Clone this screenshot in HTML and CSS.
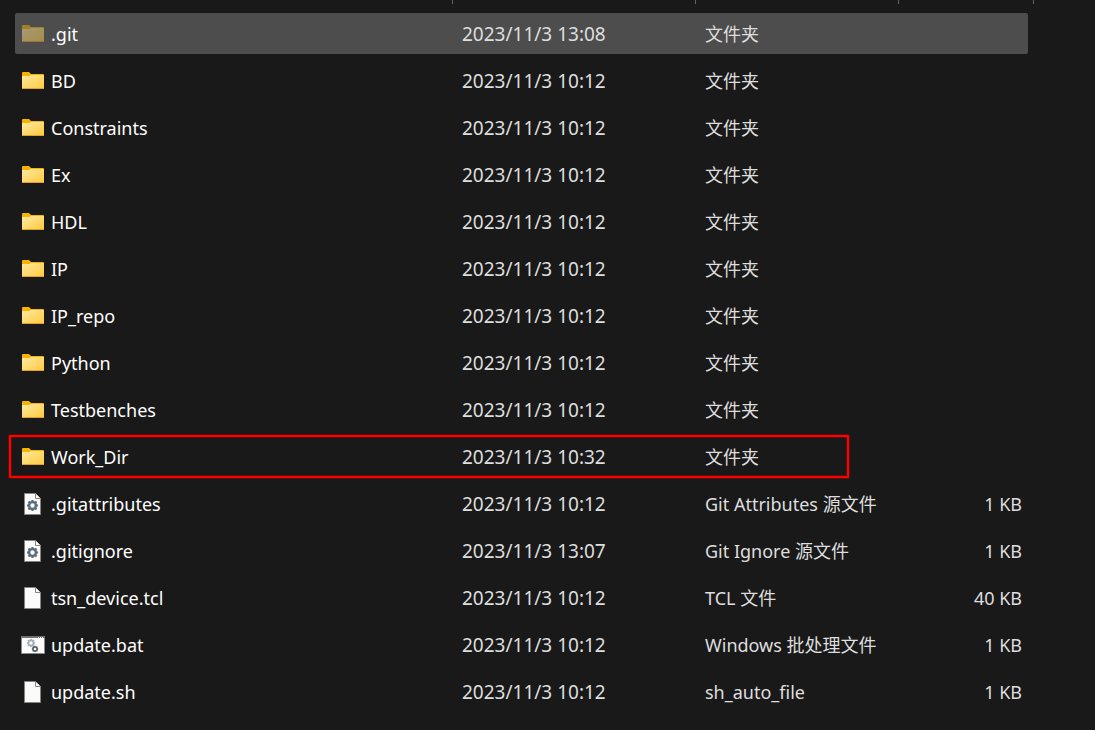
FILE: index.html
```html
<!DOCTYPE html>
<html lang="zh-CN">
<head>
<meta charset="utf-8">
<meta name="viewport" content="width=device-width, initial-scale=1">
<title>文件列表</title>
<link rel="stylesheet" href="styles.css">
</head>
<body>
<svg class="sprite" aria-hidden="true">
  <defs>
    <linearGradient id="folder-face" x1="0" y1="0" x2="1" y2="1">
      <stop offset="0" stop-color="#ffe9a4"/>
      <stop offset="1" stop-color="#ffc93c"/>
    </linearGradient>
    <symbol id="folder" viewBox="0 0 24 24">
      <path d="M1 4q0-1 1-1h6l2 2h12q1 0 1 1v4H1z" fill="#f8b200"/>
      <path d="M1 7h7l2-1h13v13.500q0 .5-.5.500h-21q-.5 0-.5-.5z" fill="url(#folder-face)"/>
      <path d="M1 19h22v.500q0 .5-.5.500h-21q-.5 0-.5-.5z" fill="#e3a02a"/>
    </symbol>
    <symbol id="page" viewBox="0 0 24 24">
      <path d="M3.500 1.500h11l5 5v16h-16z" fill="#fbfbfb" stroke="#85857f"/>
      <path d="M14.500 1.500v5h5" fill="#fbfbfb" stroke="#85857f"/>
    </symbol>
    <symbol id="gear" viewBox="-6 -6 12 12">
      <g fill="none" stroke="currentColor">
        <circle r="3.400" stroke-width="2.400"/>
        <path d="M0-5.600v2M0 3.600v2M-5.600 0h2M3.600 0h2M-4-4l1.400 1.400M2.600 2.600l1.400 1.400M-4 4l1.400-1.400M2.600-2.600l1.400-1.400" stroke-width="2.200"/>
      </g>
    </symbol>
    <symbol id="config" viewBox="0 0 24 24">
      <use href="#page"/>
      <use href="#gear" x="5.500" y="7.500" width="12" height="12" color="#5d6d76"/>
    </symbol>
    <symbol id="batch" viewBox="0 0 24 24">
      <path d="M.5 3.500h23v17H.5z" fill="#fbfbfb" stroke="#8a8a88"/>
      <path d="M0 3h24v2H0z" fill="#72706d"/>
      <path d="M17 4.500h1M19 4.500h1M21 4.500h1" stroke="#fff"/>
      <use href="#gear" x="5.500" y="5.500" width="9" height="9" color="#a5afb9"/>
      <use href="#gear" x="10.500" y="12.500" width="7" height="7" color="#535c63"/>
    </symbol>
  </defs>
</svg>
<main class="explorer">
  <div class="column-dividers" aria-hidden="true"><span></span><span></span><span></span><span></span><span></span></div>
  <table class="files" aria-label="文件列表">
    <colgroup><col><col class="col-date"><col class="col-type"><col class="col-size"></colgroup>
    <tbody>
      <tr class="selected"><td><div class="name"><svg class="icon"><use href="#folder"/></svg>.git</div></td><td class="date">2023/11/3 13:08</td><td>文件夹</td><td class="size"></td></tr>
      <tr><td><div class="name"><svg class="icon"><use href="#folder"/></svg>BD</div></td><td class="date">2023/11/3 10:12</td><td>文件夹</td><td class="size"></td></tr>
      <tr><td><div class="name"><svg class="icon"><use href="#folder"/></svg>Constraints</div></td><td class="date">2023/11/3 10:12</td><td>文件夹</td><td class="size"></td></tr>
      <tr><td><div class="name"><svg class="icon"><use href="#folder"/></svg>Ex</div></td><td class="date">2023/11/3 10:12</td><td>文件夹</td><td class="size"></td></tr>
      <tr><td><div class="name"><svg class="icon"><use href="#folder"/></svg>HDL</div></td><td class="date">2023/11/3 10:12</td><td>文件夹</td><td class="size"></td></tr>
      <tr><td><div class="name"><svg class="icon"><use href="#folder"/></svg>IP</div></td><td class="date">2023/11/3 10:12</td><td>文件夹</td><td class="size"></td></tr>
      <tr><td><div class="name"><svg class="icon"><use href="#folder"/></svg>IP_repo</div></td><td class="date">2023/11/3 10:12</td><td>文件夹</td><td class="size"></td></tr>
      <tr><td><div class="name"><svg class="icon"><use href="#folder"/></svg>Python</div></td><td class="date">2023/11/3 10:12</td><td>文件夹</td><td class="size"></td></tr>
      <tr><td><div class="name"><svg class="icon"><use href="#folder"/></svg>Testbenches</div></td><td class="date">2023/11/3 10:12</td><td>文件夹</td><td class="size"></td></tr>
      <tr class="marked"><td><div class="name"><svg class="icon"><use href="#folder"/></svg>Work_Dir</div><span class="marker"></span></td><td class="date">2023/11/3 10:32</td><td>文件夹</td><td class="size"></td></tr>
      <tr><td><div class="name"><svg class="icon"><use href="#config"/></svg>.gitattributes</div></td><td class="date">2023/11/3 10:12</td><td>Git Attributes 源文件</td><td class="size">1 KB</td></tr>
      <tr><td><div class="name"><svg class="icon"><use href="#config"/></svg>.gitignore</div></td><td class="date">2023/11/3 13:07</td><td>Git Ignore 源文件</td><td class="size">1 KB</td></tr>
      <tr><td><div class="name"><svg class="icon"><use href="#page"/></svg>tsn_device.tcl</div></td><td class="date">2023/11/3 10:12</td><td>TCL 文件</td><td class="size">40 KB</td></tr>
      <tr><td><div class="name"><svg class="icon"><use href="#batch"/></svg>update.bat</div></td><td class="date">2023/11/3 10:12</td><td>Windows 批处理文件</td><td class="size">1 KB</td></tr>
      <tr><td><div class="name"><svg class="icon"><use href="#page"/></svg>update.sh</div></td><td class="date">2023/11/3 10:12</td><td>sh_auto_file</td><td class="size">1 KB</td></tr>
    </tbody>
  </table>
</main>
</body>
</html>
```

FILE: styles.css
```css
* {
  box-sizing: border-box;
}

body {
  margin: 0;
  background: #191919;
  color: #dedede;
  font: 18px/24px "Noto Sans", "Noto Sans CJK SC", sans-serif;
}

.sprite {
  position: absolute;
  width: 0;
  height: 0;
}

.explorer {
  padding: 0 61px 0 15px;
}

.column-dividers {
  display: grid;
  grid-template-columns: 1fr 243px 203px 135px 1px;
  height: 4px;
  margin-bottom: 3px;
}

.column-dividers span + span {
  border-left: 1px solid #636363;
}

.files {
  width: calc(100% - 6px);
  table-layout: fixed;
  border-collapse: separate;
  border-spacing: 0 6px;
}

.col-date {
  width: 243px;
}

.col-type {
  width: 203px;
}

.col-size {
  width: 130px;
}

.files td {
  height: 41px;
  padding: 0 0 0 10px;
  line-height: 24px;
  white-space: nowrap;
  vertical-align: middle;
}

.files td:first-child {
  padding-left: 6px;
  border-radius: 2px 0 0 2px;
}

.files td:last-child {
  border-radius: 0 2px 2px 0;
}

.files .date {
  font-size: 19px;
}

.files .size {
  padding-right: 6px;
  text-align: right;
}

.name {
  display: flex;
  align-items: center;
  gap: 6px;
  color: #fff;
}

.icon {
  flex: none;
  width: 24px;
  height: 24px;
}

.selected td {
  background: #4d4d4d;
}

.selected .icon {
  opacity: 0.5;
}

.marked {
  position: relative;
}

.marker {
  position: absolute;
  inset: -1px 179px -1px -6px;
  border: 2px solid #f00;
  border-radius: 1px;
  box-shadow: 0 0 0 1px #ff000040, inset 0 0 0 1px #ff000040;
  pointer-events: none;
}
```
